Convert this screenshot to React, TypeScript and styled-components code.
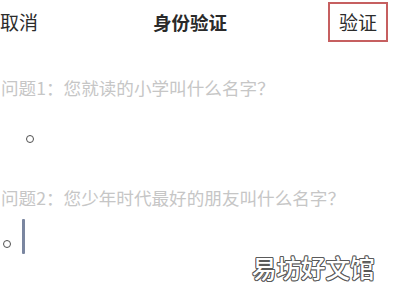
import React from "react";
import styled, { createGlobalStyle } from "styled-components";

const Global = createGlobalStyle`
  html, body { margin: 0; padding: 0; background: #ffffff; }
  body { font-family: "Noto Sans CJK SC", "Noto Sans", sans-serif; }
`;

const Page = styled.div`
  position: relative;
  width: 400px;
  height: 300px;
  overflow: hidden;
  background: #ffffff;
`;

const Header = styled.div`
  display: flex;
  align-items: center;
  justify-content: space-between;
  height: 44px;
  padding-right: 12px;
`;

const SideText = styled.span`
  font-size: 19px;
  line-height: 24px;
  color: #2c2c2c;
`;

const Title = styled.span`
  font-size: 18.5px;
  line-height: 24px;
  font-weight: 700;
  color: #2a2a2a;
  margin-left: 14px;
`;

const VerifyBox = styled.div`
  display: flex;
  align-items: center;
  justify-content: center;
  width: 60px;
  height: 40px;
  box-sizing: border-box;
  border: 2.5px solid #c65f60;
`;

const Content = styled.div`
  display: flex;
  flex-direction: column;
  padding-top: 32px;
`;

const Question = styled.div`
  font-size: 17.6px;
  line-height: 24px;
  color: #c6c6c6;
  padding-left: 1px;
  white-space: nowrap;
`;

const AnswerRow = styled.div<{ $indent: number; $height: number }>`
  display: flex;
  align-items: center;
  gap: 11px;
  height: ${(p) => p.$height}px;
  padding-left: ${(p) => p.$indent}px;
`;

const Ring = styled.span<{ $offset: number }>`
  display: block;
  width: 8px;
  height: 8px;
  box-sizing: border-box;
  border: 1.6px solid #505050;
  border-radius: 50%;
  margin-top: ${(p) => p.$offset}px;
`;

const Caret = styled.span`
  display: block;
  width: 2.5px;
  height: 35px;
  background: #7a86a0;
  border-radius: 1px;
`;

const Watermark = styled.div`
  position: absolute;
  left: 252px;
  top: 252px;
  font-size: 24.5px;
  line-height: 32px;
  font-weight: 500;
  color: #ffffff;
  text-shadow:
    1px 0 0 #5a5a5a,
    -1px 0 0 #5a5a5a,
    0 1px 0 #5a5a5a,
    0 -1px 0 #5a5a5a,
    0.7px 0.7px 0 #5a5a5a,
    -0.7px -0.7px 0 #5a5a5a,
    0.7px -0.7px 0 #5a5a5a,
    -0.7px 0.7px 0 #5a5a5a;
`;

export default function App() {
  return (
    <Page>
      <Global />
      <Header>
        <SideText>取消</SideText>
        <Title>身份验证</Title>
        <VerifyBox>
          <SideText>验证</SideText>
        </VerifyBox>
      </Header>
      <Content>
        <Question>问题1：您就读的小学叫什么名字？</Question>
        <AnswerRow $indent={26} $height={86}>
          <Ring $offset={-8} />
        </AnswerRow>
        <Question>问题2：您少年时代最好的朋友叫什么名字？</Question>
        <AnswerRow $indent={3} $height={52}>
          <Ring $offset={16} />
          <Caret />
        </AnswerRow>
      </Content>
      <Watermark>易坊好文馆</Watermark>
    </Page>
  );
}
